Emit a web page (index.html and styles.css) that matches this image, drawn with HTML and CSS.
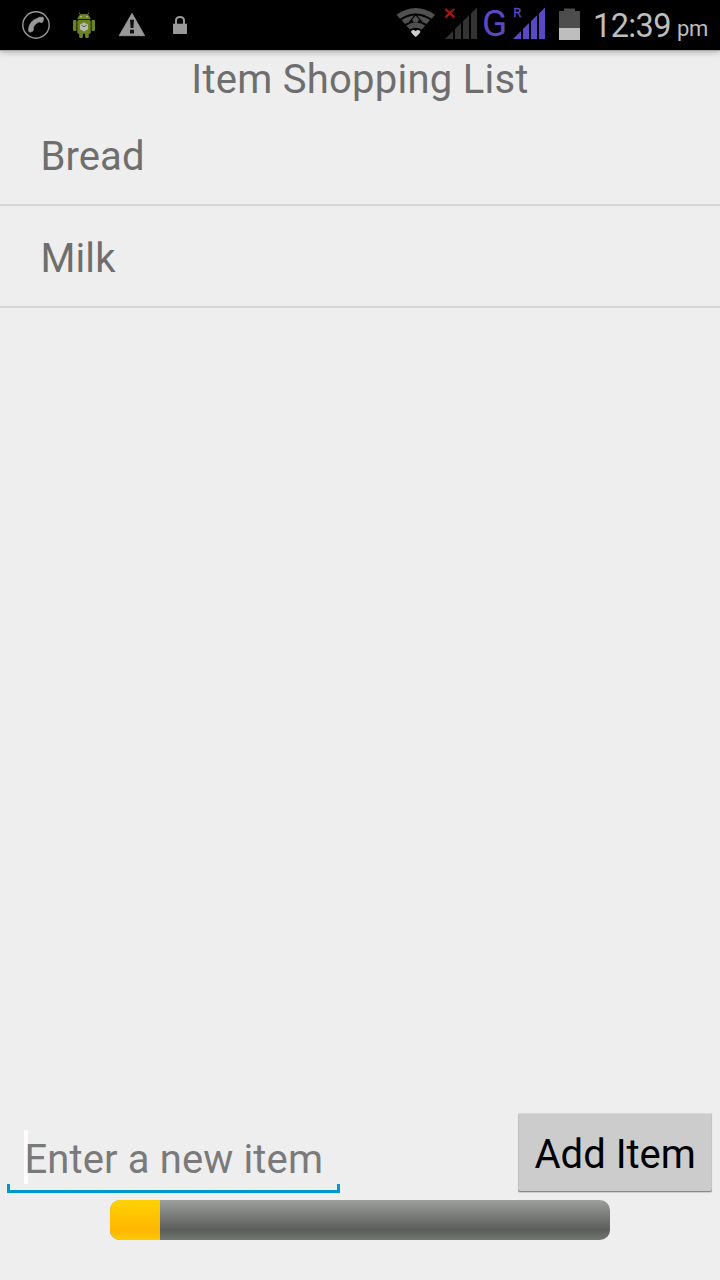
FILE: index.html
```
<!DOCTYPE html>
<html lang="en">
<head>
<meta charset="utf-8">
<title>Item Shopping List</title>
<link rel="stylesheet" href="styles.css">
</head>
<body>
<div class="screen">
  <header class="status">
    <div class="notifications">
      <svg class="icon" viewBox="12 0 48 50">
        <circle cx="36" cy="25" r="13.2" fill="none" stroke="#999" stroke-width="1.4"/>
        <path d="M39 17.2L42.6 17.1Q44 17.6 43.7 19.4L42.6 22.2Q41.5 23.2 39.4 21.9Q35.3 23 33.4 27.2Q34.2 29.8 32.6 31.3L30.2 32.3Q28.4 32 28.3 30Q29.1 21 37.3 18.2Z" fill="#999" stroke="#999" stroke-width=".5"/>
      </svg>
      <svg class="icon" viewBox="60 0 48 50">
        <g fill="#6b8421">
          <path d="M77.3 19.2A6.8 6.4 0 0 1 90.7 19.2Z"/>
          <path d="M79 12.5L81 15.5M89 12.5L87 15.5" stroke="#6b8421" stroke-width="1"/>
          <rect x="77.3" y="20" width="13.4" height="13.8" rx="1.5"/>
          <rect x="73" y="20" width="3.5" height="11" rx="1.2"/>
          <rect x="91.5" y="20" width="3.5" height="11" rx="1.2"/>
          <rect x="79.2" y="32" width="3.7" height="6" rx="1.3"/>
          <rect x="85.1" y="32" width="3.7" height="6" rx="1.3"/>
        </g>
        <circle cx="81" cy="16.7" r=".7" fill="#ddd"/><circle cx="87" cy="16.7" r=".7" fill="#ddd"/>
        <path d="M84 22.6L88 24.6V29.2L84 31.4L80 29.2V24.6Z" fill="#b8bbb0"/>
        <path d="M81.5 25.2L84 26.7L86.8 25.2" fill="none" stroke="#62664f" stroke-width="1"/>
      </svg>
      <svg class="icon" viewBox="108 0 48 50">
        <path d="M132 13.3L144.7 35.7H119.1Z" fill="#999" stroke="#999" stroke-width=".8" stroke-linejoin="round"/>
        <path d="M130 19.8H134L133.4 28H130.6ZM130 29.7H134V33.5H130Z" fill="#111"/>
      </svg>
      <svg class="icon" viewBox="156 0 48 50">
        <rect x="173" y="23.7" width="14" height="10.3" fill="#999"/>
        <path d="M176 24V20.5Q176 17 180 17T184 20.5V24" fill="none" stroke="#999" stroke-width="2"/>
      </svg>
    </div>
    <div class="system">
      <svg class="wifi" viewBox="396 0 40 50">
        <path d="M396.5 14.7Q415.7 1.3 435 14.7L431.6 18.8Q415.7 8.3 400 18.8Z" fill="#505050"/>
        <path d="M401.6 20.1Q415.7 10.9 430 20.1L426.7 24.1Q415.7 17.2 405 24.1Z" fill="#505050"/>
        <path d="M406.3 25.5Q415.7 19.5 425.2 25.5L421.8 29.5Q415.7 26.2 409.7 29.5Z" fill="#505050"/>
        <path d="M415.7 13.5L422.5 22H408.9Z" fill="#000"/>
        <path d="M415.7 15.5L420 20.5H411.4ZM413.2 20.5H418.2V22.5H413.2Z" fill="#505050"/>
        <path d="M411 31.5Q412 29.6 413.8 30L415.7 31L417.6 30Q419.4 29.6 420.4 31.5Q420.3 33 415.7 37Q411.1 33 411 31.5Z" fill="#ccc"/>
      </svg>
      <svg class="signal-off" viewBox="444 0 34 50">
        <path d="M445.4 9L454.2 17.4M454.2 9L445.4 17.4" stroke="#ad1111" stroke-width="2.4"/>
        <path d="M445 39L453 31V39ZM455 29L461 23V39H455ZM463 21.3L469 15.3V39H463ZM471 13.5L477 7.5V39H471Z" fill="#333"/>
      </svg>
      <span class="network">G</span>
      <svg class="signal" viewBox="512 0 34 50">
        <text x="513.3" y="16.5" class="roaming">R</text>
        <path d="M513 39L521 31V39ZM523 29L529 23V39H523ZM531 21.3L537 15.3V39H531ZM539 13.5L545 7.5V39H539Z" fill="#5a49c2"/>
      </svg>
      <svg class="battery" viewBox="558 0 24 50">
        <path d="M559 11H564V8.5H575V11H580V28H559Z" fill="#4d4d4d"/>
        <path d="M559 28H580V40H559Z" fill="#bebebe"/>
      </svg>
      <span class="clock">12:39</span><span class="meridiem">pm</span>
    </div>
  </header>
  <h1 class="title">Item Shopping List</h1>
  <ul class="list">
    <li class="item">Bread</li>
    <li class="item">Milk</li>
  </ul>
  <footer class="footer">
    <div class="entry">
      <div class="field"><span class="hint">Enter a new item</span></div>
      <button class="add" type="button">Add Item</button>
    </div>
    <div class="progress"><div class="progress-value" style="width:10%"></div></div>
  </footer>
</div>
</body>
</html>
```
FILE: styles.css
```
* { box-sizing: border-box; }
body {
  margin: 0;
  background: #eee;
  font-family: Roboto, "Noto Sans", sans-serif;
  font-size: 40px;
  line-height: 47px;
  color: #6e6e6e;
}
svg { display: block; flex: none; }
.screen { display: flex; flex-direction: column; width: 720px; height: 1280px; overflow: hidden; }
.status {
  display: flex;
  justify-content: space-between;
  flex: none;
  height: 50px;
  background: #000;
  box-shadow: 0 1px 0 #aaa, 0 2px 6px rgba(0, 0, 0, .3);
}
.notifications { display: flex; padding-left: 12px; }
.icon { width: 48px; height: 50px; }
.system { display: flex; width: 324px; }
.wifi { width: 40px; height: 50px; margin-right: 8px; }
.signal-off { width: 34px; height: 50px; }
.network { width: 34px; padding-left: 4px; font-size: 37px; line-height: 48px; color: #5a49c2; }
.signal { width: 34px; height: 50px; margin-right: 12px; }
.roaming { font-size: 13px; fill: #5a49c2; stroke: #5a49c2; stroke-width: .3px; }
.battery { width: 24px; height: 50px; margin-right: 11px; }
.clock { width: 84px; font-size: 32.5px; letter-spacing: -.6px; line-height: 52px; color: #bebebe; white-space: nowrap; }
.meridiem { font-size: 22px; letter-spacing: -.4px; line-height: 58px; color: #bebebe; }
.title { flex: none; margin: 0; padding-top: 6px; height: 54px; font-size: 40px; font-weight: 400; letter-spacing: .25px; text-align: center; white-space: nowrap; }
.list { flex: 1; margin: 0; padding: 0; list-style: none; }
.item { height: 102px; padding: 29px 40.5px 0; border-bottom: 2px solid #d5d5d5; letter-spacing: .1px; }
.footer { flex: none; height: 168px; }
.entry { display: flex; justify-content: space-between; height: 88px; padding: 0 8px 0 7px; }
.field {
  width: 333px;
  height: 63px;
  margin-top: 18px;
  padding-left: 17.5px;
  color: #7a7a7a;
  background:
    linear-gradient(#0099cc, #0099cc) 0 100% / 100% 3px no-repeat,
    linear-gradient(#0099cc, #0099cc) 0 100% / 3px 9px no-repeat,
    linear-gradient(#0099cc, #0099cc) 100% 100% / 3px 9px no-repeat,
    linear-gradient(#fcfcfc, #fcfcfc) 17px 0 / 4px 54px no-repeat;
}
.hint { display: block; padding-top: 6px; letter-spacing: .12px; white-space: nowrap; }
.add {
  width: 194px;
  height: 79px;
  margin: 1px 0 0;
  padding: 3px 0 0 16.5px;
  border: 0;
  border-radius: 2px;
  background: #ccc;
  color: #000;
  font: inherit;
  text-align: left;
  white-space: nowrap;
  box-shadow: inset 0 -1px #888, inset 0 1px #d8d8d8, inset 1px 0 #c2c2c2, inset -1px 0 #c2c2c2, 0 1px 1px #ccc;
}
.progress {
  width: 500px;
  height: 40px;
  margin: 0 auto;
  border-radius: 10px;
  overflow: hidden;
  background: linear-gradient(#9d9e9d, #5a5d5a 75%, #747674);
}
.progress-value { height: 100%; background: linear-gradient(#ffd300, #ffb600 75%, #ffcb00); }
```
